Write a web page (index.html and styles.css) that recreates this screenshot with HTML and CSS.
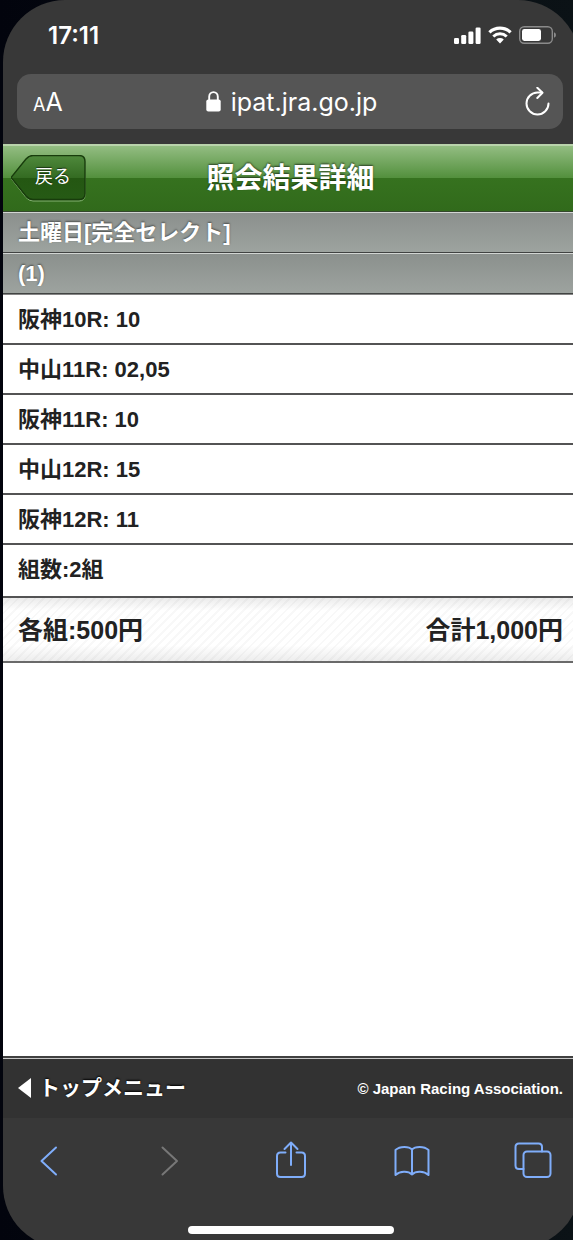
FILE: index.html
```html
<!DOCTYPE html>
<html lang="ja">
<head>
    <meta charset="UTF-8">
    <meta name="viewport" content="width=device-width, initial-scale=1.0">
    <title>照会結果詳細</title>
    <link rel="stylesheet" href="styles.css">
</head>
<body>
    <div class="phone">
        <div class="status-bar">
            <span class="clock">17:11</span>
            <div class="status-icons">
                <svg width="27" height="17" viewBox="0 0 27 17" fill="#fff">
                    <rect x="0" y="11" width="5" height="6" rx="1.3"/>
                    <rect x="7.2" y="8" width="5" height="9" rx="1.3"/>
                    <rect x="14.4" y="4.5" width="5" height="12.5" rx="1.3"/>
                    <rect x="21.6" y="0.5" width="5" height="16.5" rx="1.3"/>
                </svg>
                <svg width="24" height="18" viewBox="0 0 24 18" fill="none" stroke="#fff">
                    <path d="M1.4 6.3a15.5 15.5 0 0 1 21.2 0" stroke-width="3.2"/>
                    <path d="M5.3 10.5a9.8 9.8 0 0 1 13.4 0" stroke-width="3"/>
                    <path d="M8.2 13.6a5.6 5.6 0 0 1 7.6 0L12 17.4z" fill="#fff" stroke="none"/>
                </svg>
                <svg width="37" height="18" viewBox="0 0 37 18">
                    <rect x="0.7" y="0.7" width="32.6" height="16.6" rx="4.5" fill="none" stroke="#8b8b8b" stroke-width="1.4"/>
                    <rect x="3" y="3" width="19" height="12" rx="2.4" fill="#fff"/>
                    <path d="M35 6.2q2 .8 2 2.8t-2 2.8z" fill="#8b8b8b"/>
                </svg>
            </div>
        </div>

        <div class="address-bar">
            <button type="button" class="text-size" aria-label="文字サイズ"><span class="small-a">A</span>A</button>
            <button type="button" class="address">
                <svg width="15" height="21" viewBox="0 0 15 21">
                    <path d="M3.200 10V5.800a4.300 4.700 0 0 1 8.600 0V10" fill="none" stroke="#fff" stroke-width="1.900"/>
                    <rect x="0.300" y="8.600" width="14.400" height="11.800" rx="2" fill="#fff"/>
                </svg>
                ipat.jra.go.jp
            </button>
            <button type="button" class="reload" aria-label="再読み込み">
                <svg width="26" height="30" viewBox="0 1 26 30" fill="none" stroke="#fff" stroke-width="2" stroke-linecap="round" stroke-linejoin="round">
                    <path d="M24.500 17.500A11 11 0 1 1 13.500 6.500H18"/>
                    <path d="M13.300 1.800L18.500 6.800L13.300 12"/>
                </svg>
            </button>
        </div>

        <header class="page-header">
            <a href="#" class="back">
                <svg class="back-shape" width="76" height="48" viewBox="1 1 76 48">
                    <defs>
                        <linearGradient id="back-fill" x1="0" y1="0" x2="0" y2="1">
                            <stop offset="0" stop-color="#4f893c"/>
                            <stop offset="0.500" stop-color="#346b22"/>
                            <stop offset="0.520" stop-color="#245712"/>
                            <stop offset="1" stop-color="#265a15"/>
                        </linearGradient>
                    </defs>
                    <path d="M1.500 25L16 6Q19 2.500 23 2.500H69Q75 2.500 75 8.500V41Q75 47 69 47H23Q19 47 16 43.500Z" fill="none" stroke="#86b275"/>
                    <path d="M1 23.500L16 5Q19 1.500 23 1.500H69Q75 1.500 75 7.500V39.500Q75 45.500 69 45.500H23Q19 45.500 16 42Z" fill="url(#back-fill)" stroke="#183c0c" stroke-width="1.400"/>
                </svg>
                <span class="back-text">戻る</span>
            </a>
            <h1>照会結果詳細</h1>
        </header>

        <main class="content">
            <h2 class="section-title">土曜日[完全セレクト]</h2>
            <h2 class="section-title">(1)</h2>
            <ul class="bet-list">
                <li>阪神10R: 10</li>
                <li>中山11R: 02,05</li>
                <li>阪神11R: 10</li>
                <li>中山12R: 15</li>
                <li>阪神12R: 11</li>
                <li class="count">組数:2組</li>
            </ul>
            <div class="total">
                <span>各組:500円</span>
                <span>合計1,000円</span>
            </div>
        </main>

        <footer class="page-footer">
            <a href="#" class="top-menu">
                <svg width="13" height="20" viewBox="0 0 13 20"><path d="M0 10L13 0V20Z" fill="#fff"/></svg>
                トップメニュー
            </a>
            <small>© Japan Racing Association.</small>
        </footer>

        <nav class="toolbar">
            <div class="tools">
                <button type="button" aria-label="戻る">
                    <svg width="40" height="40" viewBox="0 0 40 40"><path d="M27 6.500L12.500 20L27 33.500"/></svg>
                </button>
                <button type="button" aria-label="進む" disabled>
                    <svg width="40" height="40" viewBox="0 0 40 40"><path d="M12.500 6.500L27 20L12.500 33.500"/></svg>
                </button>
                <button type="button" aria-label="共有">
                    <svg width="40" height="40" viewBox="0 0 40 40">
                        <path d="M14.500 11.500H9.500Q6 11.500 6 15V32.500Q6 36 9.500 36H30.500Q34 36 34 32.500V15Q34 11.500 30.500 11.500H25.500"/>
                        <path d="M20 24V1.500M13.500 8L20 1.500L26.500 8"/>
                    </svg>
                </button>
                <button type="button" aria-label="ブックマーク">
                    <svg width="40" height="40" viewBox="0 0 40 40">
                        <path d="M20 8.500V33.500M20 8.500C17 5.200 8 4.800 3.500 9V34C8 30 16 29.500 20 33.500C24 29.500 32 30 36.500 34V9C32 4.800 23 5.200 20 8.500"/>
                    </svg>
                </button>
                <button type="button" aria-label="タブ">
                    <svg width="40" height="40" viewBox="0 0 40 40">
                        <rect x="10.500" y="10.500" width="27" height="25.500" rx="3.500"/>
                        <path d="M10.500 28H6Q2.500 28 2.500 24.500V6Q2.500 2.500 6 2.500H25.500Q29 2.500 29 6V10.500"/>
                    </svg>
                </button>
            </div>
            <div class="home-indicator"></div>
        </nav>
    </div>
</body>
</html>
```
FILE: styles.css
```css
/* Global Styles */
* {
    box-sizing: border-box;
}

body {
    margin: 0;
    height: 100vh;
    overflow: hidden;
    background: linear-gradient(90deg, #02040d, #0b1216);
    font-family: "Liberation Sans", "Noto Sans CJK JP", sans-serif;
    font-weight: bold;
    color: #222;
}

h1,
h2,
ul {
    margin: 0;
    padding: 0;
}

a {
    color: #fff;
    text-decoration: none;
}

button {
    padding: 0;
    border: none;
    background: none;
    color: #fff;
    cursor: pointer;
}

svg {
    display: block;
    flex: none;
}

/* Device, runs a little past the right and bottom edges */
.phone {
    display: flex;
    flex-direction: column;
    min-height: calc(100vh + 8px);
    margin: 0 -7px 0 3px;
    border-radius: 62px;
    overflow: hidden;
    background: #383838;
}

/* Status Bar */
.status-bar {
    display: flex;
    justify-content: space-between;
    align-items: center;
    height: 74px;
    padding: 0 24px 4px 45px;
}

.clock {
    font-family: Inter, sans-serif;
    font-size: 24px;
    font-weight: 600;
    color: #fff;
}

.status-icons {
    display: flex;
    align-items: center;
    gap: 7px;
}

/* Address Bar */
.address-bar {
    display: grid;
    grid-template-columns: 1fr auto 1fr;
    align-items: center;
    height: 55px;
    margin: 0 17px 15px 14px;
    padding: 0 13px 0 16px;
    border-radius: 14px;
    background: #555;
}

.text-size {
    justify-self: start;
    font-family: Inter, sans-serif;
    font-size: 25px;
}

.small-a {
    font-size: 18px;
}

.address {
    display: flex;
    align-items: center;
    gap: 10px;
    font-family: Inter, sans-serif;
    font-size: 25px;
}

.reload {
    justify-self: end;
}

/* Page Header */
.page-header {
    display: grid;
    grid-template-columns: 1fr auto 1fr;
    align-items: center;
    height: 68px;
    padding: 0 10px 0 8px;
    border-top: 2px solid #b9d3ab;
    border-bottom: 1px solid #34472d;
    background: linear-gradient(#93bd82, #53903d 49%, #36721f 50%, #316a1b);
}

.page-header h1 {
    font-size: 28px;
    line-height: 36px;
    color: #fff;
    text-shadow: 0 -1px 2px rgba(0, 0, 0, 0.6);
}

.back {
    display: grid;
    justify-self: start;
    align-items: center;
}

.back-shape,
.back-text {
    grid-area: 1 / 1;
}

.back-text {
    padding: 0 0 4px 24px;
    font-size: 18px;
    font-weight: normal;
    line-height: 24px;
    text-shadow: 0 -1px 1px rgba(0, 0, 0, 0.6);
}

/* Content */
.content {
    flex: 1;
    background: #fff;
}

.section-title {
    height: 41px;
    padding-left: 15px;
    border-top: 1px solid #d2d5d3;
    border-bottom: 1px solid #414342;
    background: linear-gradient(#8b908d, #9da39f);
    font-size: 22px;
    line-height: 40px;
    color: #fff;
    text-shadow: 0 -1px 2px rgba(0, 0, 0, 0.5);
}

.bet-list {
    border-top: 1px solid #858585;
    list-style: none;
}

.bet-list li {
    height: 50px;
    padding-left: 15px;
    border-bottom: 2px solid #535354;
    font-size: 22px;
    line-height: 50px;
}

.bet-list .count {
    height: 53px;
}

.total {
    display: flex;
    justify-content: space-between;
    height: 65px;
    padding: 0 17px 0 15px;
    border-bottom: 2px solid #6a6a6a;
    background:
        linear-gradient(rgba(0, 0, 0, 0.08), transparent 20%, transparent 75%, rgba(0, 0, 0, 0.07)),
        repeating-linear-gradient(135deg, #fff 0 4px, #f8f8f8 4px 6px);
    font-size: 25px;
    line-height: 64px;
}

/* Page Footer */
.page-footer {
    display: flex;
    justify-content: space-between;
    align-items: center;
    height: 62px;
    padding: 0 17px 0 15px;
    border-top: 2px solid #414141;
    background: #323232;
    box-shadow: inset 0 1px #c8c8c8;
    color: #fff;
}

.top-menu {
    display: flex;
    align-items: center;
    gap: 8px;
    font-size: 21px;
    line-height: 24px;
    text-shadow: 0 -1px 2px #000;
}

.page-footer small {
    font-size: 15px;
}

/* Browser Toolbar */
.toolbar {
    display: flex;
    flex-direction: column;
    justify-content: space-between;
    height: 130px;
    padding: 23px 27px 14px 26px;
}

.tools {
    display: flex;
    justify-content: space-between;
}

.tools svg {
    fill: none;
    stroke: #7fadfa;
    stroke-width: 2;
    stroke-linecap: round;
    stroke-linejoin: round;
}

.tools button:disabled svg {
    stroke: #777;
}

.home-indicator {
    align-self: center;
    width: 206px;
    height: 8px;
    border-radius: 4px;
    background: #fff;
}
```
